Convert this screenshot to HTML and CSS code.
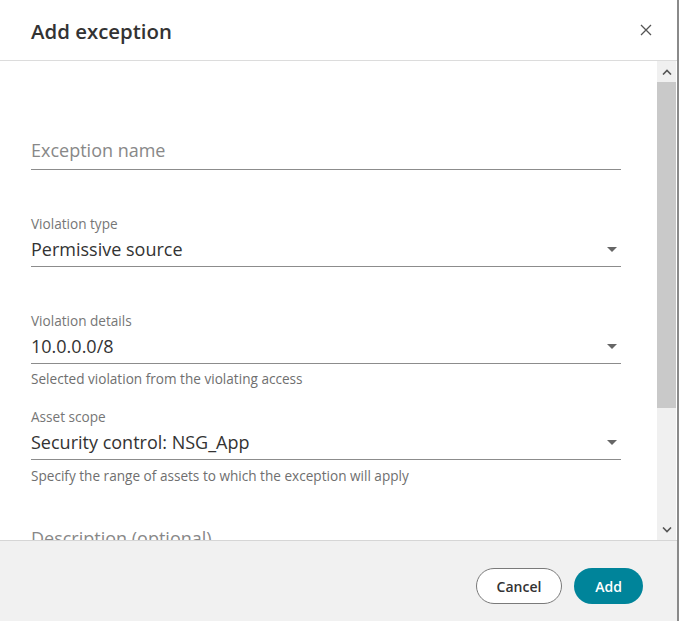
FILE: index.html
```html
<!DOCTYPE html>
<html lang="en">
<head>
<meta charset="utf-8">
<title>Add exception</title>
<link rel="stylesheet" href="styles.css">
</head>
<body>
<div class="dialog">
  <header class="dlg-header">
    <h1 class="dlg-title">Add exception</h1>
    <button class="close-btn" aria-label="Close">
      <svg width="12" height="12" viewBox="0 0 12 12"><path d="M1 1 L11 11 M11 1 L1 11" stroke="#555" stroke-width="1.3" fill="none"/></svg>
    </button>
  </header>
  <div class="dlg-body">
    <div class="content">
      <div class="field field-name">
        <div class="input placeholder">Exception name</div>
      </div>
      <div class="field field-type">
        <div class="label">Violation type</div>
        <div class="input select">Permissive source<span class="caret"></span></div>
      </div>
      <div class="field field-details">
        <div class="label">Violation details</div>
        <div class="input select">10.0.0.0/8<span class="caret"></span></div>
        <div class="helper">Selected violation from the violating access</div>
      </div>
      <div class="field field-scope">
        <div class="label">Asset scope</div>
        <div class="input select">Security control: NSG_App<span class="caret"></span></div>
        <div class="helper">Specify the range of assets to which the exception will apply</div>
      </div>
      <div class="field field-desc">
        <div class="input placeholder">Description (optional)</div>
      </div>
    </div>
    <div class="scrollbar">
      <div class="sb-btn">
        <svg width="10" height="6" viewBox="0 0 10 6"><path d="M1 5.5 L5 1.5 L9 5.5" stroke="#555" stroke-width="1.6" fill="none"/></svg>
      </div>
      <div class="sb-thumb"></div>
      <div class="sb-track"></div>
      <div class="sb-btn">
        <svg width="10" height="6" viewBox="0 0 10 6"><path d="M1 0.5 L5 4.5 L9 0.5" stroke="#555" stroke-width="1.6" fill="none"/></svg>
      </div>
    </div>
  </div>
  <footer class="dlg-footer">
    <button class="btn btn-cancel">Cancel</button>
    <button class="btn btn-add">Add</button>
  </footer>
</div>
</body>
</html>
```
FILE: styles.css
```css
* { box-sizing: border-box; }
html, body { margin: 0; padding: 0; }
body {
  font-family: "Open Sans", "Noto Sans", sans-serif;
  background: #fff;
  width: 679px;
  height: 621px;
  overflow: hidden;
}
.dialog {
  width: 679px;
  height: 621px;
  display: flex;
  flex-direction: column;
  background: #fff;
  border-right: 2px solid #8a8a8a;
}
.dlg-header {
  height: 61px;
  flex: none;
  display: flex;
  align-items: center;
  justify-content: space-between;
  padding: 0 24px 0 31px;
  border-bottom: 1px solid #dcdcdc;
}
.dlg-title {
  margin: 0;
  font-size: 20.4px;
  font-weight: 600;
  color: #333;
  line-height: 28px;
  padding-top: 1px;
}
.close-btn {
  background: none;
  border: 0;
  padding: 0;
  width: 12px;
  height: 12px;
  display: flex;
  margin-right: 1px;
}
.dlg-body {
  flex: 1;
  display: flex;
  min-height: 0;
}
.content {
  flex: 1;
  overflow: hidden;
  padding: 77px 36px 0 31px;
}
.scrollbar {
  width: 19px;
  margin-right: 1px;
  display: flex;
  flex-direction: column;
  background: #f0f0f0;
}
.sb-btn {
  height: 21px;
  display: flex;
  align-items: center;
  justify-content: center;
  flex: none;
}
.sb-thumb {
  height: 326px;
  background: #c9c9c9;
  flex: none;
}
.sb-track { flex: 1; }
.label {
  font-size: 13.6px;
  line-height: 18px;
  color: #767676;
  margin-bottom: 4px;
}
.input {
  font-size: 18px;
  line-height: 24px;
  color: #333;
  padding-bottom: 5px;
  border-bottom: 1px solid #8c8c8c;
  position: relative;
}
.placeholder { color: #888; }
.field-name .input { padding-bottom: 7px; }
.field-desc .input { border-bottom: 0; }
.caret {
  position: absolute;
  right: 4px;
  top: 10px;
  width: 0;
  height: 0;
  border-left: 5px solid transparent;
  border-right: 5px solid transparent;
  border-top: 5px solid #666;
}
.helper {
  font-size: 13.6px;
  line-height: 18px;
  color: #6f6f6f;
  margin-top: 6px;
}
.field-scope .helper { margin-top: 7px; }
.field-type { margin-top: 45px; }
.field-details { margin-top: 45px; }
.field-scope { margin-top: 20px; }
.field-desc { margin-top: 41px; }
.dlg-footer {
  height: 81px;
  flex: none;
  background: #f1f1f1;
  border-top: 1px solid #d6d6d6;
  display: flex;
  justify-content: flex-end;
  align-items: flex-start;
  gap: 12px;
  padding: 27px 34px 0 0;
}
.btn {
  height: 36px;
  border-radius: 18px;
  font-family: "Open Sans", "Noto Sans", sans-serif;
  font-size: 14px;
  font-weight: 600;
  padding: 0;
}
.btn-cancel {
  width: 86px;
  background: #fff;
  border: 1px solid #7a7a7a;
  color: #333;
}
.btn-add {
  width: 69px;
  background: #00849a;
  border: 0;
  color: #fff;
}
```
